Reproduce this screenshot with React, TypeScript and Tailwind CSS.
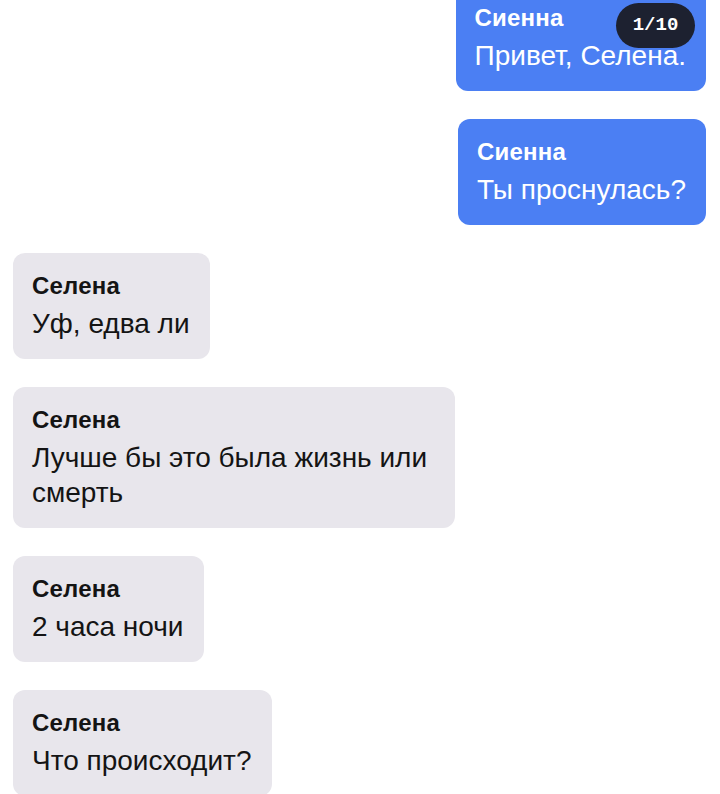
import React from "react";

type Msg = { from: string; text: string; mine: boolean };

const messages: Msg[] = [
  { from: "Сиенна", text: "Привет, Селена.", mine: true },
  { from: "Сиенна", text: "Ты проснулась?", mine: true },
  { from: "Селена", text: "Уф, едва ли", mine: false },
  { from: "Селена", text: "Лучше бы это была жизнь или смерть", mine: false },
  { from: "Селена", text: "2 часа ночи", mine: false },
  { from: "Селена", text: "Что происходит?", mine: false },
];

const Bubble = ({ msg }: { msg: Msg }) => {
  const { from, text, mine } = msg;
  return (
    <div className={mine ? "flex justify-end" : "flex justify-start"}>
      <div
        className={
          mine
            ? "max-w-[442px] rounded-[12px] bg-[#4b7ff3] pl-[19px] pr-[20px] pt-[18px] pb-[18px] text-white"
            : "max-w-[442px] rounded-[12px] bg-[#e8e6ec] pl-[19px] pr-[20px] pt-[18px] pb-[18px] text-[#141414]"
        }
      >
        <p className="text-[24px] leading-[30px] font-bold tracking-[0.2px]">{from}</p>
        <p className="mt-[5px] text-[28px] leading-[35px]">{text}</p>
      </div>
    </div>
  );
};

export default function App() {
  return (
    <div
      className="relative h-[794px] w-[720px] overflow-hidden bg-white"
      style={{ fontFamily: '"Liberation Sans", Arial, sans-serif' }}
    >
      <div className="mt-[-15px] flex flex-col gap-[28px] pl-[13px] pr-[14px]">
        {messages.map((m, i) => (
          <Bubble key={i} msg={m} />
        ))}
      </div>
      {/* photo counter badge */}
      <div className="absolute left-[616px] top-[3px] flex h-[45px] w-[79px] items-center justify-center rounded-full bg-[#1d2130] text-[19px] font-bold text-white oldstyle-nums [font-family:'Liberation_Mono',monospace]">
        1/10
      </div>
    </div>
  );
}
